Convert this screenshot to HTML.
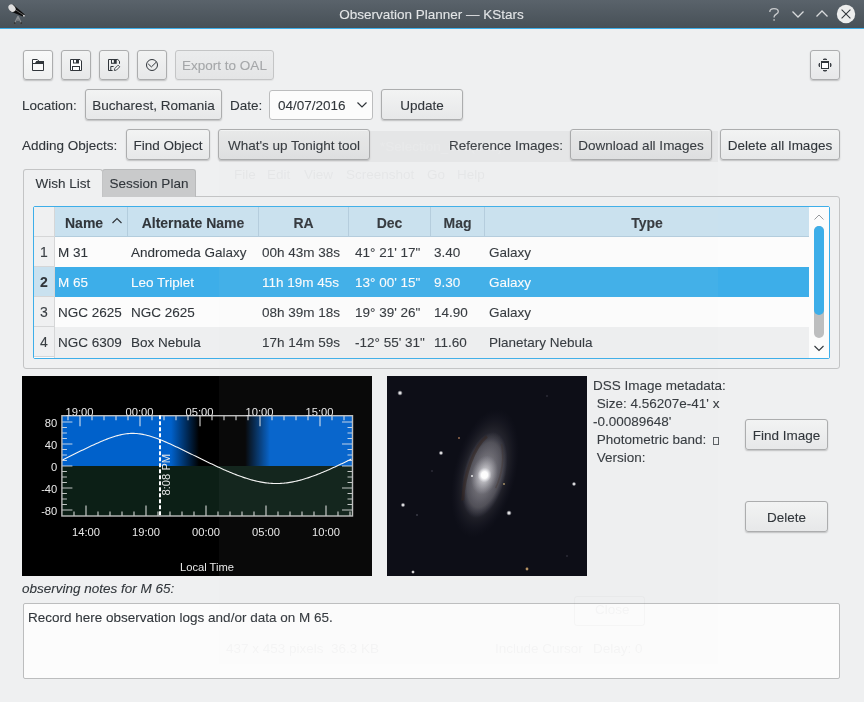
<!DOCTYPE html>
<html><head><meta charset="utf-8">
<style>
*{box-sizing:border-box;margin:0;padding:0}
html,body{width:864px;height:702px;overflow:hidden;background:#eff0f1}body{will-change:transform}
body{position:relative;font-family:"Liberation Sans",sans-serif;font-size:13.5px;color:#31363b;-webkit-text-stroke:0.1px currentColor}
.a{position:absolute;white-space:nowrap}
.titlebar{left:0;top:0;width:864px;height:28px;background:linear-gradient(#5a636b,#475057)}
.blueline{left:0;top:28px;width:864px;height:1px;background:#3daee9}
.btn{position:absolute;border:1px solid #acadae;border-radius:3px;background:linear-gradient(#f2f3f3,#e7e8e9);box-shadow:0 1px 1.5px rgba(0,0,0,0.2);text-align:center;line-height:29px;white-space:nowrap}
.btn.hov{background:linear-gradient(#f8f9f9,#eff0f0)}
.btn.dis{color:#a5a7a9;border-color:#c4c5c6;background:linear-gradient(#ebeced,#e4e5e6);box-shadow:0 1px 1px rgba(0,0,0,0.06)}
.lbl{position:absolute;line-height:31px;white-space:nowrap}
.hdr{position:absolute;top:207px;height:30px;background:#c9e1ef;border-right:1px solid #b3cddd;border-bottom:1px solid #b3cddd;font-weight:bold;font-size:14px;text-align:center;line-height:32px}
.vh{position:absolute;left:34px;width:21px;height:30px;background:#eff0f1;border-bottom:1px solid #d5d6d7;border-right:1px solid #d5d6d7;text-align:center;line-height:31px;color:#3b4045;font-size:14px}
.row{position:absolute;left:55px;width:754px;height:30px;line-height:32px}
.row span{position:absolute;top:0}
</style></head><body>
<div class="a titlebar"></div>
<div class="a blueline"></div>
<div class="a" style="left:339px;top:0;width:185px;line-height:29px;color:#e3e5e7;text-align:center">Observation Planner — KStars</div>
<!-- window icon -->
<svg class="a" style="left:0;top:0" width="30" height="28" viewBox="0 0 30 28">
<path d="M18,16L14.8,23M18,16L21.2,23M18,16V21" stroke="#8a8e92" stroke-width="1.2"/>
<circle cx="14.8" cy="23" r="0.9" fill="#333"/><circle cx="21.2" cy="23" r="0.9" fill="#333"/>
<path d="M13,4.6L24.8,14.4L23.6,16.8L10.2,11.2Z" fill="#0c0c0c"/>
<path d="M15,9.5L23.5,15" stroke="#888" stroke-width="0.7"/>
<ellipse cx="12" cy="8.2" rx="3.1" ry="4.1" transform="rotate(-40 12 8.2)" fill="#dedede"/>
<circle cx="23.9" cy="15.8" r="1" fill="#ccc"/>
</svg>
<!-- title buttons -->
<svg class="a" style="left:760px;top:0" width="104" height="28" viewBox="0 0 104 28">
<path d="M9.8,12 C9.8,9.6 11.8,8.6 14,8.6 C16.6,8.6 18.3,9.9 18.3,11.7 C18.3,14 14.1,14.3 14.1,16.8 V17.4" fill="none" stroke="#c8cacc" stroke-width="1.3"/>
<rect x="13.3" y="19.2" width="1.6" height="1.5" fill="#b8babc"/>
<path d="M32.5,11.5L38,17L43.5,11.5" fill="none" stroke="#d8dadc" stroke-width="1.3"/>
<path d="M56.5,16.5L62,11L67.5,16.5" fill="none" stroke="#d8dadc" stroke-width="1.3"/>
<circle cx="86" cy="14" r="9.2" fill="#eceded"/>
<path d="M81.6,9.6L90.4,18.4M90.4,9.6L81.6,18.4" stroke="#31363b" stroke-width="1.05"/>
</svg>

<!-- toolbar row -->
<div class="btn hov" style="left:23px;top:50px;width:30px;height:30px"></div>
<div class="btn" style="left:61px;top:50px;width:30px;height:30px"></div>
<div class="btn" style="left:99px;top:50px;width:30px;height:30px"></div>
<div class="btn" style="left:137px;top:50px;width:30px;height:30px"></div>
<svg class="a" style="left:30px;top:57px" width="16" height="16" viewBox="0 0 16 16">
<rect x="2" y="4" width="12" height="3" fill="#31363b"/>
<path d="M2.5,13.5V2.5H7.3L9.3,4.5H13.5V13.5Z" fill="none" stroke="#31363b"/>
<path d="M3,3H7L5,6H3Z" fill="#fff"/>
<path d="M3,7.5H13V13H3Z" fill="#fafafa"/>
</svg><svg class="a" style="left:68px;top:57px" width="16" height="16" viewBox="0 0 16 16">
<path d="M2.5,2.5H12L13.5,4V13.5H2.5Z" fill="#fff" stroke="#31363b"/>
<rect x="5" y="2" width="6" height="4.5" fill="#31363b"/>
<rect x="6" y="3" width="2" height="2.5" fill="#fff"/>
<rect x="4" y="9" width="8" height="5" fill="#31363b"/>
<rect x="5" y="10" width="6" height="3" fill="#fff"/>
</svg><svg class="a" style="left:106px;top:57px" width="16" height="16" viewBox="0 0 16 16">
<path d="M6.6,13.5H2.5V2.5H11.8L13.5,4.2V6.8" fill="none" stroke="#31363b"/>
<rect x="5" y="2" width="5.7" height="4.8" fill="#31363b"/>
<rect x="6" y="3.1" width="1.8" height="2.6" fill="#fff"/>
<path d="M4.8,13.5V9.5H7.6" fill="none" stroke="#31363b"/>
<path d="M8.4,13.5L8.8,11.5L12.1,8.2L13.7,9.8L10.4,13.1Z" fill="#fff" stroke="#31363b" stroke-width="0.9" stroke-linejoin="round"/>
</svg><svg class="a" style="left:144px;top:57px" width="16" height="16" viewBox="0 0 16 16">
<circle cx="8" cy="8" r="5.5" fill="none" stroke="#31363b" stroke-width="1"/>
<path d="M4.2,6.9L7.4,9.9L12.4,5" fill="none" stroke="#31363b" stroke-width="1"/>
</svg>
<div class="btn dis" style="left:175px;top:50px;width:99px;height:30px">Export to OAL</div>
<div class="btn" style="left:810px;top:50px;width:30px;height:30px"></div>
<svg class="a" style="left:817px;top:57px" width="16" height="16" viewBox="0 0 16 16">
<rect x="4.5" y="4.5" width="7" height="7" fill="#fff" stroke="#31363b"/>
<rect x="4" y="4" width="8" height="2" fill="#31363b"/>
<path d="M6,2.5H10L8,1.8Z M6,13.5H10L8,14.2Z M2.5,6V10L1.8,8Z M13.5,6V10L14.2,8Z" fill="#31363b" stroke="#31363b" stroke-width="0.8"/>
</svg>

<!-- location row -->
<div class="lbl" style="left:22px;top:90px">Location:</div>
<div class="btn" style="left:85px;top:89px;width:137px;height:31px;line-height:31px">Bucharest, Romania</div>
<div class="lbl" style="left:230px;top:90px">Date:</div>
<div class="a" style="left:269px;top:90px;width:104px;height:30px;border:1px solid #bcbdbe;border-radius:3px;background:#fcfcfc;line-height:29px;padding-left:8px">04/07/2016</div>
<svg class="a" style="left:355px;top:100px" width="14" height="10" viewBox="0 0 14 10"><path d="M2.5,2.5L7,7L11.5,2.5" fill="none" stroke="#31363b" stroke-width="1.2"/></svg>
<div class="btn" style="left:381px;top:89px;width:82px;height:31px;line-height:31px">Update</div>

<!-- adding row -->
<div class="lbl" style="left:22px;top:130px">Adding Objects:</div>
<div class="btn" style="left:126px;top:129px;width:84px;height:31px;line-height:31px">Find Object</div>
<div class="btn" style="left:218px;top:129px;width:152px;height:31px;line-height:31px">What's up Tonight tool</div>
<div class="lbl" style="left:449px;top:130px">Reference Images:</div>
<div class="btn" style="left:570px;top:129px;width:142px;height:31px;line-height:31px">Download all Images</div>
<div class="btn" style="left:720px;top:129px;width:120px;height:31px;line-height:31px">Delete all Images</div>

<!-- tabs -->
<div class="a" style="left:23px;top:196px;width:817px;height:173px;border:1px solid #c3c4c5;border-radius:0 3px 3px 3px;background:#eff0f1"></div>
<div class="a" style="left:102px;top:169px;width:94px;height:28px;border:1px solid #b9babb;border-bottom:none;border-radius:3px 3px 0 0;background:#c9cacb;line-height:27px;text-align:center">Session Plan</div>
<div class="a" style="left:23px;top:169px;width:80px;height:28px;border:1px solid #c3c4c5;border-bottom:none;border-radius:3px 3px 0 0;background:#eff0f1;line-height:27px;text-align:center">Wish List</div>

<!-- table -->
<div class="a" style="left:33px;top:206px;width:797px;height:153px;border:1px solid #3daee9;border-radius:2px;background:#fcfcfc"></div>
<div class="a" style="left:34px;top:207px;width:21px;height:30px;background:#eff0f1;border-right:1px solid #d5d6d7;border-bottom:1px solid #d5d6d7"></div>
<div class="hdr" style="left:55px;width:73px;text-align:left;padding-left:10px">Name</div>
<svg class="a" style="left:110px;top:215px" width="14" height="12" viewBox="0 0 14 12"><path d="M2.5,8L7,3.5L11.5,8" fill="none" stroke="#31363b" stroke-width="1.2"/></svg>
<div class="hdr" style="left:128px;width:131px">Alternate Name</div>
<div class="hdr" style="left:259px;width:90px">RA</div>
<div class="hdr" style="left:349px;width:82px">Dec</div>
<div class="hdr" style="left:431px;width:54px">Mag</div>
<div class="hdr" style="left:485px;width:324px;border-right:none">Type</div>

<div class="vh" style="top:237px">1</div>
<div class="vh" style="top:267px;background:#c9e1ef;font-weight:bold;color:#31363b">2</div>
<div class="vh" style="top:297px">3</div>
<div class="vh" style="top:327px">4</div>
<div class="a" style="left:34px;top:357px;width:21px;height:1px;background:#fcfcfc;border-right:1px solid #d5d6d7"></div>

<div class="row" style="top:237px;background:#fcfcfc"><span style="left:3px">M 31</span><span style="left:76px">Andromeda Galaxy</span><span style="left:207px">00h 43m 38s</span><span style="left:300px">41° 21' 17"</span><span style="left:379px">3.40</span><span style="left:434px">Galaxy</span></div>
<div class="row" style="top:267px;background:#3daee9;color:#fcfcfc"><span style="left:3px">M 65</span><span style="left:76px">Leo Triplet</span><span style="left:207px">11h 19m 45s</span><span style="left:300px">13° 00' 15"</span><span style="left:379px">9.30</span><span style="left:434px">Galaxy</span></div>
<div class="row" style="top:297px;background:#fcfcfc"><span style="left:3px">NGC 2625</span><span style="left:76px">NGC 2625</span><span style="left:207px">08h 39m 18s</span><span style="left:300px">19° 39' 26"</span><span style="left:379px">14.90</span><span style="left:434px">Galaxy</span></div>
<div class="row" style="top:327px;height:31px;background:#eeeff0"><span style="left:3px">NGC 6309</span><span style="left:76px">Box Nebula</span><span style="left:207px">17h 14m 59s</span><span style="left:300px">-12° 55' 31"</span><span style="left:379px">11.60</span><span style="left:434px">Planetary Nebula</span></div>

<!-- scrollbar -->
<svg class="a" style="left:809px;top:207px" width="20" height="151" viewBox="0 0 20 151">
<rect width="20" height="151" fill="#fcfcfc"/>
<path d="M5.5,12.5L10,8L14.5,12.5" fill="none" stroke="#31363b" stroke-width="1" opacity="0.5"/>
<rect x="5" y="19" width="10" height="112" rx="5" fill="#bdbebf"/>
<rect x="5" y="19" width="10" height="89" rx="5" fill="#3daee9"/>
<path d="M5.5,139L10,143.5L14.5,139" fill="none" stroke="#31363b" stroke-width="1.1"/>
</svg>

<svg class="a" style="left:22px;top:376px" width="350" height="200" viewBox="0 0 350 200"><rect x="0" y="0" width="350" height="200" fill="#000"/>
<defs><linearGradient id="tw" gradientUnits="userSpaceOnUse" x1="39.9" y1="0" x2="330.5" y2="0">
<stop offset="0" stop-color="#0061cb"/>
<stop offset="0.3754" stop-color="#0061cb"/>
<stop offset="0.4718" stop-color="#000"/>
<stop offset="0.6301" stop-color="#000"/>
<stop offset="0.7161" stop-color="#0061cb"/>
<stop offset="1" stop-color="#0061cb"/>
</linearGradient></defs>
<rect x="39.9" y="39.7" width="290.6" height="50.3" fill="url(#tw)"/>
<rect x="39.9" y="90" width="290.6" height="50" fill="#0c1f16"/>
<polyline points="39.9,84.18 41.4,83.45 42.9,82.71 44.4,81.98 45.9,81.24 47.4,80.51 48.9,79.77 50.4,79.03 51.9,78.29 53.4,77.55 54.9,76.82 56.4,76.08 57.9,75.35 59.4,74.61 60.9,73.89 62.4,73.16 63.9,72.44 65.4,71.72 66.9,71.01 68.4,70.30 69.9,69.60 71.4,68.91 72.9,68.22 74.4,67.55 75.9,66.88 77.4,66.22 78.9,65.58 80.4,64.94 81.9,64.33 83.4,63.72 84.9,63.13 86.4,62.57 87.9,62.02 89.4,61.49 90.9,60.98 92.4,60.50 93.9,60.05 95.4,59.62 96.9,59.23 98.4,58.87 99.9,58.54 101.4,58.25 102.9,58.00 104.4,57.79 105.9,57.63 107.4,57.50 108.9,57.42 110.4,57.39 111.9,57.40 113.4,57.45 114.9,57.55 116.4,57.70 117.9,57.89 119.4,58.11 120.9,58.38 122.4,58.69 123.9,59.03 125.4,59.41 126.9,59.82 128.4,60.26 129.9,60.72 131.4,61.21 132.9,61.73 134.4,62.27 135.9,62.83 137.4,63.41 138.9,64.00 140.4,64.61 141.9,65.24 143.4,65.88 144.9,66.53 146.4,67.19 147.9,67.86 149.4,68.54 150.9,69.23 152.4,69.93 153.9,70.63 155.4,71.34 156.9,72.06 158.4,72.78 159.9,73.50 161.4,74.23 162.9,74.96 164.4,75.69 165.9,76.42 167.4,77.16 168.9,77.90 170.4,78.63 171.9,79.37 173.4,80.11 174.9,80.85 176.4,81.59 177.9,82.32 179.4,83.06 180.9,83.79 182.4,84.52 183.9,85.25 185.4,85.97 186.9,86.69 188.4,87.41 189.9,88.12 191.4,88.83 192.9,89.54 194.4,90.24 195.9,90.93 197.4,91.62 198.9,92.30 200.4,92.97 201.9,93.63 203.4,94.29 204.9,94.94 206.4,95.58 207.9,96.21 209.4,96.83 210.9,97.44 212.4,98.04 213.9,98.63 215.4,99.20 216.9,99.77 218.4,100.31 219.9,100.85 221.4,101.37 222.9,101.87 224.4,102.35 225.9,102.82 227.4,103.27 228.9,103.71 230.4,104.12 231.9,104.51 233.4,104.88 234.9,105.23 236.4,105.56 237.9,105.86 239.4,106.14 240.9,106.40 242.4,106.63 243.9,106.83 245.4,107.01 246.9,107.17 248.4,107.29 249.9,107.39 251.4,107.46 252.9,107.50 254.4,107.51 255.9,107.50 257.4,107.46 258.9,107.39 260.4,107.29 261.9,107.17 263.4,107.01 264.9,106.83 266.4,106.63 267.9,106.40 269.4,106.14 270.9,105.86 272.4,105.56 273.9,105.23 275.4,104.88 276.9,104.51 278.4,104.12 279.9,103.71 281.4,103.27 282.9,102.82 284.4,102.35 285.9,101.87 287.4,101.37 288.9,100.85 290.4,100.31 291.9,99.77 293.4,99.20 294.9,98.63 296.4,98.04 297.9,97.44 299.4,96.83 300.9,96.21 302.4,95.58 303.9,94.94 305.4,94.29 306.9,93.63 308.4,92.97 309.9,92.30 311.4,91.62 312.9,90.93 314.4,90.24 315.9,89.54 317.4,88.83 318.9,88.12 320.4,87.41 321.9,86.69 323.4,85.97 324.9,85.25 326.4,84.52 327.9,83.79 329.4,83.06" fill="none" stroke="#f4f4f4" stroke-width="1.1"/>
<path d="M39.9,134.0h10.5 M330.5,134.0h-10.5 M39.9,128.5h5 M330.5,128.5h-5 M39.9,123.0h5 M330.5,123.0h-5 M39.9,117.5h5 M330.5,117.5h-5 M39.9,112.0h10.5 M330.5,112.0h-10.5 M39.9,106.5h5 M330.5,106.5h-5 M39.9,101.0h5 M330.5,101.0h-5 M39.9,95.5h5 M330.5,95.5h-5 M39.9,90.0h10.5 M330.5,90.0h-10.5 M39.9,84.5h5 M330.5,84.5h-5 M39.9,79.0h5 M330.5,79.0h-5 M39.9,73.5h5 M330.5,73.5h-5 M39.9,68.0h10.5 M330.5,68.0h-10.5 M39.9,62.5h5 M330.5,62.5h-5 M39.9,57.0h5 M330.5,57.0h-5 M39.9,51.5h5 M330.5,51.5h-5 M39.9,46.0h10.5 M330.5,46.0h-10.5 M52,140.0v-4.5 M64,140.0v-10.5 M76,140.0v-4.5 M88,140.0v-4.5 M100,140.0v-4.5 M112,140.0v-4.5 M124,140.0v-10.5 M136,140.0v-4.5 M148,140.0v-4.5 M160,140.0v-4.5 M172,140.0v-4.5 M184,140.0v-10.5 M196,140.0v-4.5 M208,140.0v-4.5 M220,140.0v-4.5 M232,140.0v-4.5 M244,140.0v-10.5 M256,140.0v-4.5 M268,140.0v-4.5 M280,140.0v-4.5 M292,140.0v-4.5 M304,140.0v-10.5 M316,140.0v-4.5 M328,140.0v-4.5 M46,39.7v4.5 M58,39.7v10.5 M70,39.7v4.5 M82,39.7v4.5 M94,39.7v4.5 M106,39.7v4.5 M118,39.7v10.5 M130,39.7v4.5 M142,39.7v4.5 M154,39.7v4.5 M166,39.7v4.5 M178,39.7v10.5 M190,39.7v4.5 M202,39.7v4.5 M214,39.7v4.5 M226,39.7v4.5 M238,39.7v10.5 M250,39.7v4.5 M262,39.7v4.5 M274,39.7v4.5 M286,39.7v4.5 M298,39.7v10.5 M310,39.7v4.5 M322,39.7v4.5" stroke="#f0f0f0" stroke-opacity="0.8" stroke-width="1.2" fill="none"/>
<rect x="39.9" y="39.7" width="290.6" height="100.3" fill="none" stroke="#bdbdbd" stroke-width="1.4"/>
<path d="M138,39.2V140.0" stroke="#fff" stroke-width="2" stroke-dasharray="4,2"/>
<g style="-webkit-text-stroke:0" fill="#e8e8e8" font-family="Liberation Sans" font-size="11.2"><text x="35.3" y="50.9" text-anchor="end">80</text><text x="35.3" y="72.9" text-anchor="end">40</text><text x="35.3" y="94.9" text-anchor="end">0</text><text x="35.3" y="116.9" text-anchor="end">-40</text><text x="35.3" y="138.9" text-anchor="end">-80</text><text x="57.5" y="39.8" text-anchor="middle">19:00</text><text x="117.5" y="39.8" text-anchor="middle">00:00</text><text x="177.5" y="39.8" text-anchor="middle">05:00</text><text x="237.5" y="39.8" text-anchor="middle">10:00</text><text x="297.5" y="39.8" text-anchor="middle">15:00</text><text x="64" y="160.0" text-anchor="middle">14:00</text><text x="124" y="160.0" text-anchor="middle">19:00</text><text x="184" y="160.0" text-anchor="middle">00:00</text><text x="244" y="160.0" text-anchor="middle">05:00</text><text x="304" y="160.0" text-anchor="middle">10:00</text><text x="185" y="195.3" text-anchor="middle">Local Time</text><text transform="translate(148.4,119.5) rotate(-90)" x="0" y="0">8:08 PM</text></g></svg>
<svg class="a" style="left:387px;top:376px" width="200" height="200" viewBox="0 0 200 200">
<defs>
<radialGradient id="halo" cx="0.5" cy="0.5" r="0.5">
<stop offset="0" stop-color="#8a8890" stop-opacity="0.6"/>
<stop offset="0.6" stop-color="#55535c" stop-opacity="0.35"/>
<stop offset="1" stop-color="#202030" stop-opacity="0"/>
</radialGradient>
<radialGradient id="mid" cx="0.5" cy="0.5" r="0.5">
<stop offset="0" stop-color="#b0aeb6" stop-opacity="0.7"/>
<stop offset="0.75" stop-color="#7a7880" stop-opacity="0.45"/>
<stop offset="1" stop-color="#606070" stop-opacity="0"/>
</radialGradient>
<radialGradient id="bulge" cx="0.5" cy="0.5" r="0.5">
<stop offset="0" stop-color="#ffffff" stop-opacity="0.8"/>
<stop offset="1" stop-color="#c0c0c8" stop-opacity="0"/>
</radialGradient>
<radialGradient id="core" cx="0.5" cy="0.5" r="0.5">
<stop offset="0" stop-color="#fff"/>
<stop offset="0.45" stop-color="#fff" stop-opacity="0.95"/>
<stop offset="1" stop-color="#e0e0e8" stop-opacity="0"/>
</radialGradient>
<radialGradient id="st" cx="0.5" cy="0.5" r="0.5">
<stop offset="0" stop-color="#fff"/>
<stop offset="0.4" stop-color="#fff" stop-opacity="0.8"/>
<stop offset="1" stop-color="#aab" stop-opacity="0"/>
</radialGradient>
</defs>
<rect width="200" height="200" fill="#05060f"/>
<g transform="translate(97.5,99) rotate(14)">
<ellipse cx="0" cy="-2" rx="31" ry="66" fill="url(#halo)"/>
<ellipse cx="0" cy="0" rx="21" ry="44" fill="url(#mid)"/>
<path d="M-7,-38 C-17,-25 -20,5 -15,30" fill="none" stroke="#2e1f1a" stroke-width="3" opacity="0.55"/>
<path d="M9,-34 C15,-22 17,-5 14,10" fill="none" stroke="#3a2a24" stroke-width="1.6" opacity="0.35"/>
<ellipse cx="0" cy="0" rx="13" ry="20" fill="url(#bulge)"/>
<ellipse cx="0" cy="0" rx="7" ry="7.5" fill="url(#core)"/>
</g>
<g fill="url(#st)">
<circle cx="13" cy="17" r="2.8"/>
<circle cx="54" cy="77" r="2.4"/>
<circle cx="16" cy="129" r="2.4"/>
<circle cx="122" cy="137" r="2.8"/>
<circle cx="187" cy="108" r="2.3"/>
<circle cx="26" cy="196" r="2"/>
<circle cx="85" cy="100" r="1.5"/>
</g>
<circle cx="140" cy="193" r="1.4" fill="#e0b070" opacity="0.8"/>
<circle cx="117" cy="108" r="1" fill="#e0c080" opacity="0.7"/>
<circle cx="72" cy="62" r="1" fill="#d09060" opacity="0.7"/>
<circle cx="30" cy="139" r="0.8" fill="#889" opacity="0.6"/>
<circle cx="45" cy="95" r="0.7" fill="#889" opacity="0.5"/>
<circle cx="160" cy="20" r="0.7" fill="#889" opacity="0.5"/>
<circle cx="180" cy="180" r="0.7" fill="#889" opacity="0.5"/>
</svg>


<!-- metadata -->
<div class="a" style="left:593px;top:377px;line-height:18px;white-space:pre">DSS Image metadata:
 Size: 4.56207e-41' x
-0.00089648'
 Photometric band: <span style="display:inline-block;width:6px;height:8px;border:1px solid #5a5e62;vertical-align:-1px;margin-left:3px"></span>
 Version: </div>

<div class="btn" style="left:745px;top:419px;width:83px;height:31px;line-height:32px">Find Image</div>
<div class="btn" style="left:745px;top:501px;width:83px;height:31px;line-height:32px">Delete</div>

<div class="a" style="left:22px;top:581px;font-style:italic;line-height:16px">observing notes for M 65:</div>
<div class="a" style="left:23px;top:603px;width:817px;height:76px;border:1px solid #bcbdbe;border-radius:2px;background:#fcfcfc;padding:6px 0 0 4px;line-height:16px">Record here observation logs and/or data on M 65.</div>

<!-- ghost overlay -->
<div class="a" style="left:219px;top:131px;width:499px;height:533px;background:#eff0f1;opacity:0.038"></div>
<div class="a" style="left:219px;top:131px;width:499px;height:31px;background:#475057;opacity:0.05"></div>
<div class="a" style="left:0;top:0;color:#31363b;opacity:0.045;line-height:18px;-webkit-text-stroke:0">
<span class="a" style="left:234px;top:166px">File</span><span class="a" style="left:267px;top:166px">Edit</span><span class="a" style="left:304px;top:166px">View</span><span class="a" style="left:346px;top:166px">Screenshot</span><span class="a" style="left:427px;top:166px">Go</span><span class="a" style="left:457px;top:166px">Help</span></div>
<div class="a" style="left:380px;top:131px;line-height:31px;color:#ffffff;opacity:0.13;-webkit-text-stroke:0">*Selection_003(002)</div>
<div class="a" style="left:0;top:0;color:#31363b;opacity:0.035;line-height:18px;-webkit-text-stroke:0">
<span class="a" style="left:226px;top:640px">437 x 453 pixels&nbsp;&nbsp;36.3 KB</span><span class="a" style="left:495px;top:640px">Include Cursor</span><span class="a" style="left:593px;top:640px">Delay: 0</span><span class="a" style="left:595px;top:601px">Close</span></div>
<div class="a" style="left:574px;top:596px;width:71px;height:30px;border:1px solid #31363b;border-radius:3px;opacity:0.03"></div>
</body></html>
